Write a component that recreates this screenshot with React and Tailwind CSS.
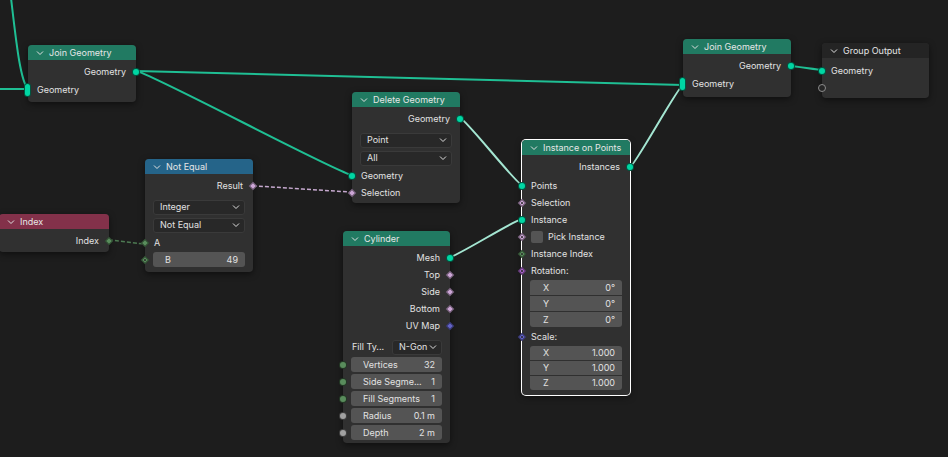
import React from "react";

const TEAL = "#00d6a3";
const PINK = "#cca6d6";
const GREEN = "#598c5c";
const GRAY = "#a1a1a1";
const BLUE = "#6363c7";
const PURPLE = "#a663c7";

function Chevron({ color = "#dcdcdc" }) {
    return (
        <svg width="8" height="6" viewBox="0 0 8 6" className="shrink-0">
            <path d="M1 1.5 L4 4.5 L7 1.5" stroke={color} strokeWidth="1" fill="none" />
        </svg>
    );
}

// socket drawn on the node edge
function Socket({ side, kind = "circle", color = TEAL }) {
    const pos = side === "left" ? "left-[-4px]" : "right-[-4px]";
    if (kind === "pill") {
        return (
            <div className={`absolute ${pos} top-1/2 -translate-y-1/2 w-[7px] h-[14px] rounded-full border border-black/60`} style={{ background: color }} />
        );
    }
    if (kind === "hollow") {
        return (
            <div className={`absolute ${pos} top-1/2 -translate-y-1/2 w-[8px] h-[8px] rounded-full border border-[#8c8c8c] bg-[#262626]`} />
        );
    }
    if (kind === "diamond" || kind === "dot") {
        return (
            <div className={`absolute ${pos} top-1/2 -translate-y-1/2 w-[8px] h-[8px] flex items-center justify-center`}>
                <div className="w-[6px] h-[6px] rotate-45 border border-black/50 flex items-center justify-center" style={{ background: color }}>
                    {kind === "dot" && <div className="w-[2px] h-[2px] bg-[#2b2b2b] rounded-full" />}
                </div>
            </div>
        );
    }
    return (
        <div className={`absolute ${pos} top-1/2 -translate-y-1/2 w-[8px] h-[8px] rounded-full border border-black/60`} style={{ background: color }} />
    );
}

function Node({ x, y, w = 108, title, header, selected, children }) {
    return (
        <div
            className={`absolute rounded-[4px] bg-[#303030] shadow-[0_2px_6px_rgba(0,0,0,0.5)] ${selected ? "ring-1 ring-white" : ""}`}
            style={{ left: x, top: y, width: w }}
        >
            <div className="h-[15px] rounded-t-[4px] flex items-center gap-[5px] pl-[8px] text-[#e6e6e6]" style={{ background: header }}>
                <Chevron color="#e0e0e0" />
                <span className="leading-none whitespace-nowrap">{title}</span>
            </div>
            {children}
        </div>
    );
}

function Out({ label, sock }) {
    return (
        <div className="relative h-[17px] flex items-center justify-end pr-[10px]">
            <span>{label}</span>
            <Socket side="right" {...sock} />
        </div>
    );
}

function In({ label, sock, h = "h-[17px]" }) {
    return (
        <div className={`relative ${h} flex items-center pl-[9px]`}>
            <span>{label}</span>
            {sock && <Socket side="left" {...sock} />}
        </div>
    );
}

function Dropdown({ value }) {
    return (
        <div className="h-[18px] flex items-center px-[8px]">
            <div className="flex-1 h-[15px] rounded-[3px] bg-[#282828] border border-[#3a3a3a] flex items-center justify-between pl-[6px] pr-[4px]">
                <span>{value}</span>
                <Chevron />
            </div>
        </div>
    );
}

function Field({ label, value, sock }) {
    return (
        <div className="relative h-[17px] flex items-center px-[8px]">
            <div className="flex-1 h-[15px] rounded-[3px] bg-[#545454] flex items-center justify-between pl-[12px] pr-[7px] whitespace-nowrap">
                <span className="truncate">{label}</span>
                <span>{value}</span>
            </div>
            {sock && <Socket side="left" {...sock} />}
        </div>
    );
}

function VectorBlock({ rows, h = "h-[15px]" }) {
    return (
        <div className="px-[8px] py-[1px]">
            <div className="flex flex-col gap-[1px] rounded-[3px] overflow-hidden">
                {rows.map(([axis, val]) => (
                    <div key={axis} className={`${h} bg-[#545454] flex items-center justify-between pl-[13px] pr-[7px]`}>
                        <span>{axis}</span>
                        <span>{val}</span>
                    </div>
                ))}
            </div>
        </div>
    );
}

function curve(x1, y1, x2, y2, k = 0.06) {
    const c = Math.abs(x2 - x1) * k;
    return `M ${x1} ${y1} C ${x1 + c} ${y1}, ${x2 - c} ${y2}, ${x2} ${y2}`;
}

const links = [
    { d: "M 11 -2 C 16 40, 20 80, 28 89", color: "#1fbf94" },
    { d: "M -4 89 L 28 89", color: "#1fbf94" },
    { d: curve(136, 71, 683, 85, 0.03), color: "#1fbf94" },
    { d: curve(136, 71, 352, 175, 0.05), color: "#1fbf94" },
    { d: curve(253, 186, 352, 192), color: "#c6a9cf", dash: true },
    { d: curve(109, 240, 145, 244), color: "#4d7a52", dash: true },
    { d: curve(460, 118, 522, 185, 0.08), color: "#a4e6d2" },
    { d: curve(450, 257, 522, 219, 0.08), color: "#a4e6d2" },
    { d: curve(630, 167, 683, 85, 0.08), color: "#a4e6d2" },
    { d: curve(791, 66, 822, 70), color: "#1fbf94" },
];

export default function App() {
    return (
        <div className="relative w-[948px] h-[457px] overflow-hidden bg-[#1d1d1d] font-['Inter','Noto_Sans',sans-serif] text-[9px] text-[#e2e2e2]">
            {/* links under the nodes */}
            <svg className="absolute inset-0" width="948" height="457">
                {links.map((l, i) => (
                    <path
                        key={i}
                        d={l.d}
                        stroke={l.color}
                        strokeWidth={l.dash ? 1.5 : 2}
                        strokeDasharray={l.dash ? "4 2" : undefined}
                        fill="none"
                    />
                ))}
            </svg>

            {/* Join Geometry (left) */}
            <Node x={28} y={45} title="Join Geometry" header="#217a62">
                <div className="pt-[3px] pb-[2px]">
                    <Out label="Geometry" sock={{ kind: "circle", color: TEAL }} />
                    <In label="Geometry" h="h-[20px]" sock={{ kind: "pill", color: TEAL }} />
                </div>
            </Node>

            {/* Index */}
            <Node x={-1} y={214} w={110} title="Index" header="#83314a">
                <div className="pt-[3px] pb-[3px]">
                    <Out label="Index" sock={{ kind: "diamond", color: GREEN }} />
                </div>
            </Node>

            {/* Not Equal */}
            <Node x={145} y={159} title="Not Equal" header="#256489">
                <div className="pt-[3px] pb-[4px]">
                    <Out label="Result" sock={{ kind: "diamond", color: PINK }} />
                    <div className="h-[4px]" />
                    <Dropdown value="Integer" />
                    <Dropdown value="Not Equal" />
                    <In label="A" sock={{ kind: "diamond", color: GREEN }} />
                    <Field label="B" value="49" sock={{ kind: "dot", color: GREEN }} />
                </div>
            </Node>

            {/* Delete Geometry */}
            <Node x={352} y={92} title="Delete Geometry" header="#217a62">
                <div className="pt-[3px] pb-[2px]">
                    <Out label="Geometry" sock={{ kind: "circle", color: TEAL }} />
                    <div className="h-[4px]" />
                    <Dropdown value="Point" />
                    <Dropdown value="All" />
                    <In label="Geometry" sock={{ kind: "circle", color: TEAL }} />
                    <In label="Selection" sock={{ kind: "diamond", color: PINK }} />
                </div>
            </Node>

            {/* Cylinder */}
            <Node x={343} y={231} w={107} title="Cylinder" header="#217a62">
                <div className="pt-[3px] pb-[2px]">
                    <Out label="Mesh" sock={{ kind: "circle", color: TEAL }} />
                    <Out label="Top" sock={{ kind: "diamond", color: PINK }} />
                    <Out label="Side" sock={{ kind: "diamond", color: PINK }} />
                    <Out label="Bottom" sock={{ kind: "diamond", color: PINK }} />
                    <Out label="UV Map" sock={{ kind: "diamond", color: BLUE }} />
                    <div className="h-[4px]" />
                    <div className="h-[18px] flex items-center pl-[9px] pr-[8px] gap-[4px] whitespace-nowrap">
                        <span className="w-[36px] shrink-0">Fill Ty...</span>
                        <div className="flex-1 h-[15px] rounded-[3px] bg-[#282828] border border-[#3a3a3a] flex items-center justify-between pl-[6px] pr-[4px]">
                            <span>N-Gon</span>
                            <Chevron />
                        </div>
                    </div>
                    <Field label="Vertices" value="32" sock={{ kind: "circle", color: GREEN }} />
                    <Field label="Side Segme..." value="1" sock={{ kind: "circle", color: GREEN }} />
                    <Field label="Fill Segments" value="1" sock={{ kind: "circle", color: GREEN }} />
                    <Field label="Radius" value="0.1 m" sock={{ kind: "circle", color: GRAY }} />
                    <Field label="Depth" value="2 m" sock={{ kind: "circle", color: GRAY }} />
                </div>
            </Node>

            {/* Instance on Points */}
            <Node x={522} y={140} title="Instance on Points" header="#217a62" selected>
                <div className="pt-[3px] pb-[4px]">
                    <Out label="Instances" sock={{ kind: "circle", color: TEAL }} />
                    <div className="h-[2px]" />
                    <In label="Points" sock={{ kind: "circle", color: TEAL }} />
                    <In label="Selection" sock={{ kind: "dot", color: PINK }} />
                    <In label="Instance" sock={{ kind: "circle", color: TEAL }} />
                    <div className="relative h-[17px] flex items-center pl-[9px] gap-[5px]">
                        <div className="w-[12px] h-[12px] rounded-[2px] bg-[#545454]" />
                        <span>Pick Instance</span>
                        <Socket side="left" kind="dot" color={PINK} />
                    </div>
                    <In label="Instance Index" sock={{ kind: "dot", color: GREEN }} />
                    <In label="Rotation:" sock={{ kind: "dot", color: PURPLE }} />
                    <VectorBlock rows={[["X", "0°"], ["Y", "0°"], ["Z", "0°"]]} />
                    <In label="Scale:" sock={{ kind: "dot", color: BLUE }} />
                    <VectorBlock rows={[["X", "1.000"], ["Y", "1.000"], ["Z", "1.000"]]} h="h-[14px]" />
                </div>
            </Node>

            {/* Join Geometry (right) */}
            <Node x={683} y={39} title="Join Geometry" header="#217a62">
                <div className="pt-[3px] pb-[3px]">
                    <Out label="Geometry" sock={{ kind: "circle", color: TEAL }} />
                    <In label="Geometry" h="h-[20px]" sock={{ kind: "pill", color: TEAL }} />
                </div>
            </Node>

            {/* Group Output */}
            <Node x={822} y={43} w={107} title="Group Output" header="#242424">
                <div className="pt-[4px] pb-[2px]">
                    <In label="Geometry" sock={{ kind: "circle", color: TEAL }} />
                    <In label="" sock={{ kind: "hollow" }} />
                </div>
            </Node>
        </div>
    );
}
